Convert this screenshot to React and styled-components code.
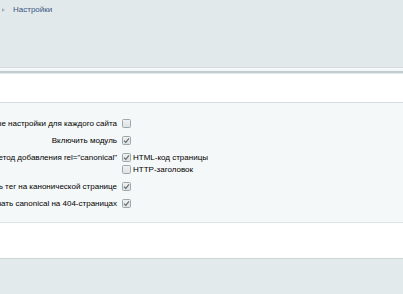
import React from 'react';
import styled, { createGlobalStyle } from 'styled-components';

const Global = createGlobalStyle`
  html, body {
    margin: 0;
    padding: 0;
    background: #e3eaec;
    font-family: "Liberation Sans", Arial, sans-serif;
  }
`;

const Page = styled.div`
  width: 403px;
  height: 294px;
  overflow: hidden;
  display: flex;
  flex-direction: column;
`;

const Header = styled.div`
  height: 68px;
  flex: none;
  background: #e2e9eb;
  border-bottom: 1px solid #d3dbde;
  box-shadow: 0 1px 0 #f7f9fa, 0 3px 0 #f3f6f7, 0 5px 0 #c2cbce;
  margin-bottom: 6px;
  padding: 5px 0 0 2px;
  box-sizing: border-box;
`;

const Crumbs = styled.div`
  display: flex;
  align-items: center;
  gap: 8px;
  font-size: 8px;
  color: #3a5583;
`;

const Arrow = styled.span`
  width: 0;
  height: 0;
  border-left: 3px solid #a9b3b7;
  border-top: 2.5px solid transparent;
  border-bottom: 2.5px solid transparent;
`;

const WhiteBand = styled.div`
  flex: none;
  background: #fff;
  height: ${p => p.$h}px;
`;

const Options = styled.div`
  flex: none;
  background: #f5f8f8;
  border-top: 1px solid #d6dde0;
  border-bottom: 1px solid #e0e6e8;
  padding: 12px 0 10px;
`;

const Row = styled.div`
  display: flex;
  align-items: flex-start;
  gap: 5px;
  padding: 2.5px 0;
`;

const Label = styled.div`
  width: 117px;
  flex: none;
  display: flex;
  justify-content: flex-end;
  height: 12px;
  align-items: center;
  overflow: visible;
`;

const LabelText = styled.span`
  white-space: nowrap;
  font-size: 8px;
  color: #000;
  flex: none;
`;

const Choices = styled.div`
  display: flex;
  flex-direction: column;
`;

const Choice = styled.label`
  display: flex;
  align-items: center;
  gap: 2px;
  height: 12px;
  font-size: 8px;
  color: #000;
  white-space: nowrap;
`;

const Box = styled.span`
  width: 9px;
  height: 9px;
  box-sizing: border-box;
  border: 1px solid #9ea7aa;
  border-radius: 1.5px;
  background: linear-gradient(#eef1f2, #dce2e4);
  display: flex;
  align-items: center;
  justify-content: center;
`;

const Footer = styled.div`
  flex: 1;
  background: #e3eaec;
  border-top: 1px solid #cdd4d7;
`;

const Check = ({ on }) => (
  <Box>
    {on && (
      <svg width="7" height="7" viewBox="0 0 7 7">
        <path d="M1 3.6 L2.8 5.4 L6 1.4" fill="none" stroke="#5f686b" strokeWidth="1.1" />
      </svg>
    )}
  </Box>
);

const rows = [
  { label: 'Индивидуальные настройки для каждого сайта', items: [{ on: false }] },
  { label: 'Включить модуль', items: [{ on: true }] },
  {
    label: 'Метод добавления rel="canonical"',
    items: [
      { on: true, text: 'HTML-код страницы' },
      { on: false, text: 'HTTP-заголовок' },
    ],
  },
  { label: 'Выводить тег на канонической странице', items: [{ on: true }] },
  { label: 'Не показывать canonical на 404-страницах', items: [{ on: true }] },
];

export default function App() {
  return (
    <Page>
      <Global />
      <Header>
        <Crumbs>
          <Arrow />
          <span>Настройки</span>
        </Crumbs>
      </Header>
      <WhiteBand $h={28} />
      <Options>
        {rows.map((r, i) => (
          <Row key={i}>
            <Label>
              <LabelText>{r.label}</LabelText>
            </Label>
            <Choices>
              {r.items.map((it, j) => (
                <Choice key={j}>
                  <Check on={it.on} />
                  {it.text}
                </Choice>
              ))}
            </Choices>
          </Row>
        ))}
      </Options>
      <WhiteBand $h={35} />
      <Footer />
    </Page>
  );
}
